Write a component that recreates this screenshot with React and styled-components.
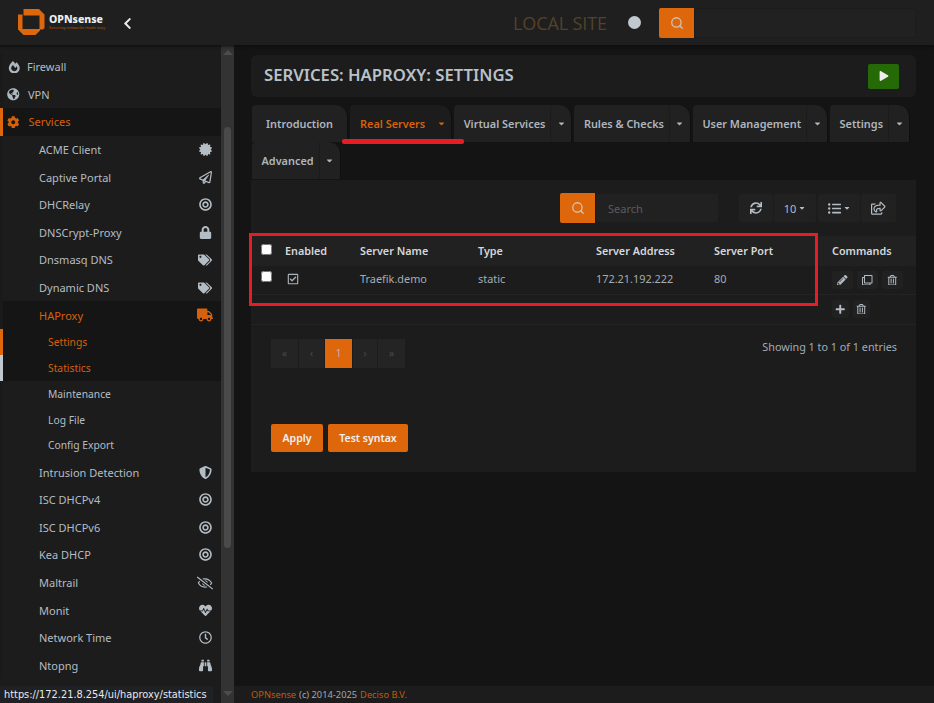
import React from "react";
import styled, { createGlobalStyle } from "styled-components";
import {
  FaFireAlt, FaGlobeAmericas, FaCog, FaCertificate, FaRegPaperPlane, FaBullseye, FaLock, FaTags,
  FaTruck, FaShieldAlt, FaRegEyeSlash, FaHeartbeat, FaRegClock, FaBinoculars, FaSync,
  FaListUl, FaRegShareSquare, FaPencilAlt, FaRegClone, FaRegTrashAlt, FaPlus, FaPlay, FaRegCheckSquare,
  FaChevronLeft, FaCaretDown,
} from "react-icons/fa";
import { Search } from "lucide-react";

const ORANGE = "#de660b";
const TEXT = "#b4bcc4";
const RED = "#e81c24";

const Global = createGlobalStyle`
  html, body { margin: 0; padding: 0; height: 100%; background: #141414; overflow: hidden; }
  body { font-family: "Noto Sans", "Open Sans", sans-serif; font-size: 11px; color: ${TEXT}; }
  #root { height: 100%; }
  * { box-sizing: border-box; }
`;

const Page = styled.div`
  position: relative;
  width: 934px;
  height: 703px;
  display: flex;
  flex-direction: column;
  overflow: hidden;
  background: #141414;
`;

/* ---------- header ---------- */
const Header = styled.header`
  flex: 0 0 45px;
  display: flex;
  align-items: center;
  padding: 0 18px 0 18px;
  background: #1f1f1f;
  box-shadow: 0 1px 3px #0c0c0c;
  z-index: 2;
`;
const Brand = styled.div`
  display: flex;
  align-items: center;
  gap: 4px;
  margin-top: -2px;
`;
const BrandText = styled.div`
  display: flex;
  flex-direction: column;
  margin-top: 1px;
`;
const BrandName = styled.span`
  font-size: 10.5px;
  line-height: 11px;
  font-weight: 800;
  color: #eceff1;
`;
const BrandTag = styled.span`
  font-size: 4px;
  line-height: 5px;
  color: #b5570f;
  white-space: nowrap;
`;
const Collapse = styled.span`
  display: flex;
  margin-left: 16px;
  margin-top: 1px;
  color: #e8e8e8;
  font-size: 13px;
`;
const SiteName = styled.span`
  margin-left: auto;
  font-family: "Open Sans", sans-serif;
  font-size: 18px;
  letter-spacing: -0.1px;
  color: #54422a;
`;
const StatusDot = styled.span`
  width: 13px;
  height: 13px;
  margin-left: 21px;
  border-radius: 50%;
  background: #c0c8d0;
`;
const SearchGroup = styled.div`
  display: flex;
  margin-left: ${(p) => p.$offset}px;
`;
const SearchAddon = styled.span`
  width: 35px;
  height: 30px;
  display: flex;
  align-items: center;
  justify-content: center;
  background: ${ORANGE};
  color: #d0c4b8;
  border-radius: 2px 0 0 2px;
`;
const SearchField = styled.div`
  width: ${(p) => p.$width}px;
  height: 30px;
  display: flex;
  align-items: center;
  padding-left: 12px;
  background: #212121;
  border: 1px solid #1c1c1c;
  border-radius: 0 2px 2px 0;
  color: #5c5c5c;
`;

/* ---------- body ---------- */
const Body = styled.div`
  flex: 1;
  min-height: 0;
  display: flex;
`;
const Sidebar = styled.nav`
  flex: 0 0 221px;
  padding-top: 8px;
  background: #1c1c1c;
  overflow: hidden;
`;
const MenuRow = styled.div`
  height: ${(p) => (p.$sub ? 25.9 : 27.6)}px;
  display: flex;
  align-items: center;
  padding-left: ${(p) => (p.$sub ? 45 : p.$top ? 4 : 36)}px;
  padding-right: 9px;
  border-left: 3px solid ${(p) => p.$bar || "#1a1a1a"};
  background: ${(p) => (p.$dark ? "#151515" : "transparent")};
  color: ${(p) => (p.$active ? "#d5610d" : TEXT)};
  font-size: ${(p) => (p.$sub ? 10.3 : 11)}px;
`;
const TopIcon = styled.span`
  width: ${(p) => p.$width}px;
  padding-left: ${(p) => p.$inset || 0}px;
  display: flex;
  font-size: 12.5px;
  color: ${(p) => (p.$active ? "#d5610d" : "#aeb6be")};
`;
const EndIcon = styled.span`
  width: 14px;
  margin-left: auto;
  display: flex;
  justify-content: center;
  color: ${(p) => (p.$active ? "#d5610d" : "#b4bcc4")};
  svg { flex: none; }
`;
const ScrollTrack = styled.div`
  position: relative;
  flex: 0 0 13px;
  background: #333;
  display: flex;
  flex-direction: column;
  align-items: center;
`;
const Arrow = styled.span`
  width: 0;
  height: 0;
  margin: ${(p) => p.$margin};
  border-left: 5px solid transparent;
  border-right: 5px solid transparent;
  ${(p) => (p.$up ? "border-bottom: 5px solid #4c4c4c;" : "border-top: 5px solid #4c4c4c;")}
`;
const Thumb = styled.div`
  width: 7px;
  height: 421px;
  margin-top: 72px;
  border-radius: 4px;
  background: #4a4a4a;
`;

const Main = styled.main`
  flex: 1;
  min-width: 0;
  display: flex;
  flex-direction: column;
`;
const Content = styled.div`
  flex: 1;
  padding: 10px 18px 0 17px;
`;
const TitleBar = styled.div`
  height: 42px;
  display: flex;
  align-items: center;
  justify-content: space-between;
  padding: 0 17px 0 13px;
  background: #1c1c1c;
  border-radius: 6px;
`;
const Title = styled.h1`
  margin: -3px 0 0;
  font-size: 16.7px;
  font-weight: 600;
  color: #b9c1c9;
`;
const PlayButton = styled.button`
  width: 31px;
  height: 25px;
  padding: 0;
  display: flex;
  align-items: center;
  justify-content: center;
  border: 0;
  border-radius: 2px;
  background: #266a08;
  color: #eee;
  font-size: 10px;
`;
const Tabs = styled.div`
  display: flex;
  flex-wrap: wrap;
  gap: 0 2px;
  margin-top: 8px;
  padding: 0 0 1px 1px;
`;
const Tab = styled.div`
  height: 37px;
  display: flex;
  align-items: center;
  background: ${(p) => (p.$active ? "#1c1c1c" : "#212121")};
  border-radius: 4px 12px 0 0;
  border-right: 1px solid #0f0f0f;
  color: ${(p) => (p.$active ? "#d5610d" : "#aeb6be")};
  font-weight: 600;
  font-size: 10.9px;
`;
const TabLabel = styled.span`
  padding: ${(p) => (p.$plain ? "0 14px" : p.$first ? "0 5px 0 10px" : "0 5px 0 9.5px")};
  white-space: nowrap;
`;
const TabCaret = styled.span`
  align-self: stretch;
  width: 21px;
  display: flex;
  align-items: center;
  justify-content: center;
  border-left: 1px solid #1c1c1c;
  font-size: 9px;
`;
const Panel = styled.section`
  height: 292px;
  background: #1c1c1c;
`;
const Toolbar = styled.div`
  height: 56px;
  display: flex;
  align-items: center;
  padding: 0 20px 0 309px;
`;
const ToolGroup = styled.div`
  display: flex;
  gap: 1px;
  margin-left: 20px;
`;
const ToolButton = styled.span`
  width: ${(p) => p.$width}px;
  height: 28px;
  margin-left: ${(p) => p.$gap || 0}px;
  display: flex;
  align-items: center;
  justify-content: center;
  gap: 2px;
  background: #212121;
  border-radius: 2px;
  font-size: ${(p) => p.$size || 11}px;
  color: #b4bcc4;
`;
const Table = styled.table`
  width: 665px;
  table-layout: fixed;
  border-collapse: collapse;
`;
const Head = styled.th`
  height: 30px;
  padding: 0 8px 2px;
  background: #212121;
  text-align: left;
  font-weight: 600;
  font-size: 10.8px;
  color: #d4d8dc;
`;
const Cell = styled.td`
  height: ${(p) => p.$height || 28}px;
  padding: 0 8px 2px;
  border-bottom: 1px solid #232323;
  font-size: 10.9px;
  color: #a4acb4;
`;
const Check = styled.input.attrs({ type: "checkbox" })`
  display: block;
  width: 11px;
  height: 11px;
  margin: -2px 0 0 2px;
`;
const RowCheck = styled(Check)`
  margin-top: -4px;
`;
const Enabled = styled.span`
  display: flex;
  padding-left: 2px;
  font-size: 12px;
  color: #aab2ba;
`;
const CommandRow = styled.div`
  display: flex;
  gap: 4px;
  margin-top: 2px;
`;
const CommandButton = styled.span`
  width: ${(p) => p.$width}px;
  height: 18px;
  display: flex;
  align-items: center;
  justify-content: center;
  background: #212121;
  border-radius: 3px;
  font-size: 10.5px;
  color: #b4bcc4;
`;
const PagerRow = styled.div`
  display: flex;
  justify-content: space-between;
  padding: 14px 19px 0 20px;
`;
const Pager = styled.div`
  display: flex;
  gap: 1px;
`;
const PageItem = styled.span`
  width: ${(p) => p.$width}px;
  height: 29px;
  display: flex;
  align-items: center;
  justify-content: center;
  background: ${(p) => (p.$active ? ORANGE : "#242424")};
  color: ${(p) => (p.$active ? "#b9b9b9" : "#4a4a4a")};
  font-size: 10px;
`;
const Showing = styled.span`
  font-size: 10.8px;
  color: #a4acb4;
`;
const Actions = styled.div`
  display: flex;
  gap: 5px;
  padding: 56px 0 0 20px;
`;
const ActionButton = styled.button`
  width: ${(p) => p.$width}px;
  height: 28px;
  padding: 0;
  border: 0;
  border-radius: 2px;
  background: ${ORANGE};
  color: #f2f2f2;
  font-family: inherit;
  font-size: 10.5px;
  font-weight: 600;
`;
const Footer = styled.footer`
  height: 17px;
  display: flex;
  align-items: center;
  gap: 3px;
  padding-left: 17px;
  background: #1c1c1c;
  font-size: 9.3px;
  color: #a0a7ae;
`;
const FooterLink = styled.span`
  color: #c25a0c;
`;

/* ---------- overlays ---------- */
const StatusBubble = styled.div`
  position: absolute;
  left: 0;
  bottom: 0;
  width: 213px;
  height: 17px;
  display: flex;
  align-items: center;
  padding-left: 4px;
  background: #1f2124;
  border-radius: 0 3px 0 0;
  font-family: "DejaVu Sans", sans-serif;
  font-size: 9.8px;
  color: #e8eaed;
  white-space: nowrap;
  z-index: 3;
`;
const Marker = styled.div`
  position: absolute;
  left: ${(p) => p.$left}px;
  top: ${(p) => p.$top}px;
  width: ${(p) => p.$width}px;
  height: ${(p) => p.$height}px;
  border-radius: ${(p) => p.$radius || 0}px;
  border: ${(p) => (p.$box ? `3px solid ${RED}` : "0")};
  background: ${(p) => (p.$box ? "transparent" : RED)};
  z-index: 3;
`;

const Logo = () => (
  <svg width="27" height="26" viewBox="0 0 27 26" aria-hidden="true">
    <path
      fill="#de660b"
      d="M5.5 0h15.5l5.5 5.5v13.5l-1.5 1.5h-3.5V6.500H5.500zM0 5.500h4.500v14.500h17.500v1.500l-4.500 4.500H5.500L0 20.500z"
    />
  </svg>
);

const services = [
  ["ACME Client", FaCertificate, 13],
  ["Captive Portal", FaRegPaperPlane, 13],
  ["DHCRelay", FaBullseye, 13],
  ["DNSCrypt-Proxy", FaLock, 13],
  ["Dnsmasq DNS", FaTags, 14],
  ["Dynamic DNS", FaTags, 14],
];
const services2 = [
  ["Intrusion Detection", FaShieldAlt, 13],
  ["ISC DHCPv4", FaBullseye, 13],
  ["ISC DHCPv6", FaBullseye, 13],
  ["Kea DHCP", FaBullseye, 13],
  ["Maltrail", FaRegEyeSlash, 16],
  ["Monit", FaHeartbeat, 13],
  ["Network Time", FaRegClock, 13],
  ["Ntopng", FaBinoculars, 13],
];
const tabs = [
  ["Real Servers", true],
  ["Virtual Services"],
  ["Rules & Checks"],
  ["User Management"],
  ["Settings"],
  ["Advanced"],
];

export default function App() {
  return (
    <Page>
      <Global />
      <Header>
        <Brand>
          <Logo />
          <BrandText>
            <BrandName>OPNsense</BrandName>
            <BrandTag>Securing networks made easy</BrandTag>
          </BrandText>
        </Brand>
        <Collapse><FaChevronLeft /></Collapse>
        <SiteName>LOCAL SITE</SiteName>
        <StatusDot />
        <SearchGroup $offset={18}>
          <SearchAddon><Search size={14} strokeWidth={2.2} /></SearchAddon>
          <SearchField $width={222} />
        </SearchGroup>
      </Header>
      <Body>
        <Sidebar>
          <MenuRow $top><TopIcon $width={20} $inset={1}><FaFireAlt /></TopIcon>Firewall</MenuRow>
          <MenuRow $top><TopIcon $width={21}><FaGlobeAmericas /></TopIcon>VPN</MenuRow>
          <MenuRow $top $dark $active $bar={ORANGE}><TopIcon $width={21.5} $active><FaCog /></TopIcon>Services</MenuRow>
          {services.map(([label, Icon, size]) => (
            <MenuRow key={label}>{label}<EndIcon><Icon size={size} /></EndIcon></MenuRow>
          ))}
          <MenuRow $dark $active>HAProxy<EndIcon $active><FaTruck size={16} /></EndIcon></MenuRow>
          <MenuRow $sub $dark $active $bar={ORANGE}>Settings</MenuRow>
          <MenuRow $sub $dark $active $bar="#c0c8d0">Statistics</MenuRow>
          <MenuRow $sub>Maintenance</MenuRow>
          <MenuRow $sub>Log File</MenuRow>
          <MenuRow $sub>Config Export</MenuRow>
          {services2.map(([label, Icon, size]) => (
            <MenuRow key={label}>{label}<EndIcon><Icon size={size} /></EndIcon></MenuRow>
          ))}
        </Sidebar>
        <ScrollTrack>
          <Arrow $up $margin="5px 0 0" />
          <Thumb />
          <Arrow $margin="auto 0 7px" />
        </ScrollTrack>
        <Main>
          <Content>
            <TitleBar>
              <Title>SERVICES: HAPROXY: SETTINGS</Title>
              <PlayButton aria-label="Start"><FaPlay /></PlayButton>
            </TitleBar>
            <Tabs>
              <Tab><TabLabel $plain>Introduction</TabLabel></Tab>
              {tabs.map(([label, active]) => (
                <Tab key={label} $active={active}>
                  <TabLabel $first={active}>{label}</TabLabel>
                  <TabCaret><FaCaretDown /></TabCaret>
                </Tab>
              ))}
            </Tabs>
            <Panel>
              <Toolbar>
                <SearchGroup $offset={0}>
                  <SearchAddon><Search size={14} strokeWidth={2.2} /></SearchAddon>
                  <SearchField $width={124}>Search</SearchField>
                </SearchGroup>
                <ToolGroup>
                  <ToolButton $width={34} $size={12}><FaSync /></ToolButton>
                  <ToolButton $width={42}>10 <FaCaretDown size={8} /></ToolButton>
                  <ToolButton $width={42} $gap={1} $size={13}><FaListUl /><FaCaretDown size={8} /></ToolButton>
                  <ToolButton $width={35} $size={14.5}><FaRegShareSquare /></ToolButton>
                </ToolGroup>
              </Toolbar>
              <Table>
                <colgroup>
                  <col style={{ width: 26 }} />
                  <col style={{ width: 75 }} />
                  <col style={{ width: 118 }} />
                  <col style={{ width: 118 }} />
                  <col style={{ width: 118 }} />
                  <col style={{ width: 118 }} />
                  <col style={{ width: 92 }} />
                </colgroup>
                <thead>
                  <tr>
                    <Head><Check /></Head>
                    <Head>Enabled</Head>
                    <Head>Server Name</Head>
                    <Head>Type</Head>
                    <Head>Server Address</Head>
                    <Head>Server Port</Head>
                    <Head>Commands</Head>
                  </tr>
                </thead>
                <tbody>
                  <tr>
                    <Cell><RowCheck /></Cell>
                    <Cell><Enabled><FaRegCheckSquare /></Enabled></Cell>
                    <Cell>Traefik.demo</Cell>
                    <Cell>static</Cell>
                    <Cell>172.21.192.222</Cell>
                    <Cell>80</Cell>
                    <Cell>
                      <CommandRow>
                        <CommandButton $width={21}><FaPencilAlt /></CommandButton>
                        <CommandButton $width={21}><FaRegClone /></CommandButton>
                        <CommandButton $width={21}><FaRegTrashAlt /></CommandButton>
                      </CommandRow>
                    </Cell>
                  </tr>
                  <tr>
                    <Cell $height={30} colSpan={6} />
                    <Cell $height={30}>
                      <CommandRow>
                        <CommandButton $width={17}><FaPlus /></CommandButton>
                        <CommandButton $width={17}><FaRegTrashAlt /></CommandButton>
                      </CommandRow>
                    </Cell>
                  </tr>
                </tbody>
              </Table>
              <PagerRow>
                <Pager>
                  <PageItem $width={27}>«</PageItem>
                  <PageItem $width={25}>‹</PageItem>
                  <PageItem $width={27} $active>1</PageItem>
                  <PageItem $width={24}>›</PageItem>
                  <PageItem $width={27}>»</PageItem>
                </Pager>
                <Showing>Showing 1 to 1 of 1 entries</Showing>
              </PagerRow>
              <Actions>
                <ActionButton $width={52}>Apply</ActionButton>
                <ActionButton $width={80}>Test syntax</ActionButton>
              </Actions>
            </Panel>
          </Content>
          <Footer>
            <FooterLink>OPNsense</FooterLink> (c) 2014-2025 <FooterLink>Deciso B.V.</FooterLink>
          </Footer>
        </Main>
      </Body>
      <Marker $left={342} $top={139} $width={122} $height={5} $radius={2} />
      <Marker $box $left={249} $top={233} $width={569} $height={73} />
      <StatusBubble>https://172.21.8.254/ui/haproxy/statistics</StatusBubble>
    </Page>
  );
}
